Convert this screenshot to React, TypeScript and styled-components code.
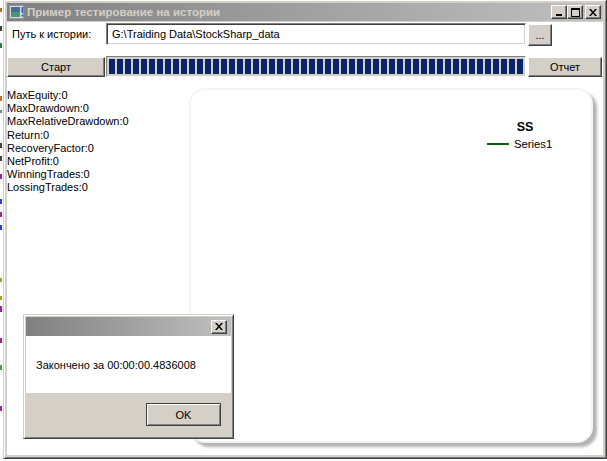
import React from "react";
import styled, { createGlobalStyle } from "styled-components";

const Global = createGlobalStyle`
  html, body { margin: 0; padding: 0; background: #fff; }
  body { font-family: "Liberation Sans", Arial, sans-serif; font-size: 11px; color: #000; }
  * { box-sizing: border-box; }
`;

const Screen = styled.div`
  position: relative;
  width: 607px;
  height: 461px;
  overflow: hidden;
  background: #fff;
`;

const BackStrip = styled.div`
  position: absolute;
  left: 0;
  top: 0;
  width: 3px;
  height: 461px;
  overflow: hidden;
  display: flex;
  flex-direction: column;
`;

const BackMark = styled.div<{ $c: string; $gap: number; $h: number }>`
  width: 2px;
  height: ${(p) => p.$h}px;
  margin-top: ${(p) => p.$gap}px;
  background: ${(p) => p.$c};
`;

const Window = styled.div`
  position: absolute;
  left: 3px;
  top: -1px;
  width: 604px;
  height: 460px;
  background: #d4d0c8;
  border: 1px solid;
  border-color: #d4d0c8 #404040 #404040 #d4d0c8;
  box-shadow: inset 1px 1px #fff, inset -1px -1px #808080;
  padding: 3px;
  display: flex;
  flex-direction: column;
`;

const TitleBar = styled.div<{ $h: number }>`
  height: ${(p) => p.$h}px;
  flex: none;
  display: flex;
  align-items: center;
  padding-left: 2px;
  background: linear-gradient(to right, #808080, #c0c0c0);
`;

const TitleText = styled.span`
  margin-left: 2px;
  font-family: "Liberation Sans", Arial, sans-serif;
  font-weight: bold;
  font-size: 11.5px;
  color: #d4d0c8;
  white-space: nowrap;
  flex: 1;
`;

const CaptionButton = styled.div<{ $gapLeft?: number }>`
  width: 16px;
  height: 14px;
  margin-left: ${(p) => p.$gapLeft ?? 0}px;
  background: #d4d0c8;
  border: 1px solid;
  border-color: #fff #404040 #404040 #fff;
  box-shadow: inset -1px -1px #808080;
  display: flex;
  align-items: center;
  justify-content: center;
  flex: none;
`;

const CaptionEnd = styled.div<{ $w: number }>`
  width: ${(p) => p.$w}px;
  flex: none;
`;

const Client = styled.div`
  margin-top: 1px;
  flex: 1;
  background: #fff;
  display: flex;
  flex-direction: column;
`;

const PathRow = styled.div`
  display: flex;
  align-items: flex-start;
  padding-top: 1px;
  height: 24px;
`;

const FieldLabel = styled.div`
  width: 99px;
  height: 22px;
  padding-left: 5px;
  display: flex;
  align-items: center;
  white-space: nowrap;
  font-size: 11px;
`;

const TextBox = styled.div`
  width: 420px;
  height: 22px;
  border: 1px solid;
  border-color: #808080 #fff #fff #808080;
  box-shadow: inset 1px 1px #404040, inset -1px -1px #d4d0c8;
  padding-left: 5px;
  display: flex;
  align-items: center;
  white-space: nowrap;
  font-size: 11px;
  background: #fff;
`;

const WinButton = styled.div<{ $w: number; $h: number; $ml?: number; $mt?: number }>`
  width: ${(p) => p.$w}px;
  height: ${(p) => p.$h}px;
  margin-left: ${(p) => p.$ml ?? 0}px;
  margin-top: ${(p) => p.$mt ?? 0}px;
  background: #d4d0c8;
  border: 1px solid;
  border-color: #fff #404040 #404040 #fff;
  box-shadow: inset -1px -1px #808080;
  display: flex;
  align-items: center;
  justify-content: center;
  font-size: 11px;
  white-space: nowrap;
  flex: none;
`;

const DefaultButton = styled(WinButton)`
  border-color: #404040;
  box-shadow: inset 1px 1px #fff, inset -1px -1px #808080;
`;

const ControlRow = styled.div`
  display: flex;
  align-items: flex-start;
  margin-top: 10px;
  height: 21px;
`;

const Progress = styled.div`
  width: 420px;
  height: 21px;
  margin-left: 1px;
  border: 1px solid;
  border-color: #808080 #fff #fff #808080;
  background: #d4d0c8;
  padding: 2px;
`;

const ProgressFill = styled.div`
  height: 100%;
  background: repeating-linear-gradient(to right, #0a246a 0 6px, transparent 6px 8px);
`;

const Main = styled.div`
  display: flex;
  margin-top: 11px;
`;

const Stats = styled.div`
  width: 182px;
  padding-top: 1px;
  display: flex;
  flex-direction: column;
`;

const StatLine = styled.div`
  font-size: 11px;
  line-height: 13.2px;
  white-space: nowrap;
`;

const ChartPanel = styled.div`
  width: 404px;
  height: 355px;
  border-radius: 16px;
  background: #fff;
  border: 2px solid #f4f4f4;
  box-shadow: 4px 4px 3px rgba(0, 0, 0, 0.3);
  padding-top: 30px;
  padding-right: 39px;
  display: flex;
  flex-direction: column;
  align-items: flex-end;
`;

const Legend = styled.div`
  width: 65px;
  display: flex;
  flex-direction: column;
`;

const LegendTitle = styled.div`
  padding-left: 11px;
  text-align: center;
  font-weight: bold;
  font-size: 12.5px;
  line-height: 15px;
`;

const LegendItem = styled.div`
  margin-top: 2px;
  height: 14px;
  display: flex;
  align-items: center;
`;

const LegendSwatch = styled.div<{ $c: string }>`
  width: 22px;
  height: 2px;
  background: ${(p) => p.$c};
  margin-right: 5px;
  flex: none;
`;

const LegendLabel = styled.span`
  font-size: 11.3px;
  white-space: nowrap;
`;

const Dialog = styled.div`
  position: absolute;
  left: 23px;
  top: 314px;
  width: 211px;
  height: 125px;
  background: #d4d0c8;
  border: 1px solid;
  border-color: #d4d0c8 #404040 #404040 #d4d0c8;
  box-shadow: inset 1px 1px #fff, inset -1px -1px #808080;
  padding: 2px;
  display: flex;
  flex-direction: column;
`;

const DialogBody = styled.div`
  height: 57px;
  background: #fff;
  padding-left: 10px;
  display: flex;
  align-items: center;
  font-size: 11px;
  white-space: nowrap;
`;

const DialogFooter = styled.div`
  flex: 1;
  display: flex;
  justify-content: flex-end;
  align-items: flex-start;
  padding: 10px 10px 0 0;
`;

const AppIcon = () => (
  <svg width="16" height="16" viewBox="0 0 16 16">
    <rect x="0.5" y="1.5" width="14" height="13" fill="#d9dde2" stroke="#8a94a4" />
    <rect x="2" y="3" width="9" height="5" fill="#4a6c8c" />
    <rect x="2" y="8" width="9" height="5" fill="#3e9a78" />
    <rect x="12.5" y="3" width="1.5" height="6" fill="#2a5cc8" />
    <rect x="12.5" y="10.5" width="1.5" height="2" fill="#2a5cc8" />
  </svg>
);

const MinGlyph = () => (
  <svg width="8" height="8" viewBox="0 0 8 8">
    <rect x="1" y="6" width="6" height="2" fill="#000" />
  </svg>
);

const MaxGlyph = () => (
  <svg width="9" height="9" viewBox="0 0 9 9">
    <rect x="0.5" y="0.5" width="8" height="8" fill="none" stroke="#000" />
    <rect x="0" y="0" width="9" height="2" fill="#000" />
  </svg>
);

const CloseGlyph = () => (
  <svg width="8" height="7" viewBox="0 0 8 7">
    <path d="M0 0h2l2 2.5L6 0h2L5 3.5 8 7H6L4 4.5 2 7H0l3-3.5z" fill="#000" />
  </svg>
);

const backMarks = [
  { c: "#c07020", gap: 8, h: 4 },
  { c: "#404040", gap: 14, h: 5 },
  { c: "#308030", gap: 12, h: 5 },
  { c: "#c07020", gap: 48, h: 5 },
  { c: "#808080", gap: 9, h: 3 },
  { c: "#404040", gap: 30, h: 5 },
  { c: "#404040", gap: 8, h: 5 },
  { c: "#a020a0", gap: 13, h: 5 },
  { c: "#2040e0", gap: 20, h: 5 },
  { c: "#a020a0", gap: 8, h: 5 },
  { c: "#2040e0", gap: 8, h: 5 },
  { c: "#b0a020", gap: 48, h: 4 },
  { c: "#b0a020", gap: 14, h: 4 },
  { c: "#a020a0", gap: 6, h: 6 },
  { c: "#a020a0", gap: 26, h: 5 },
  { c: "#40a040", gap: 22, h: 5 },
  { c: "#a020a0", gap: 36, h: 5 },
];

const stats = [
  "MaxEquity:0",
  "MaxDrawdown:0",
  "MaxRelativeDrawdown:0",
  "Return:0",
  "RecoveryFactor:0",
  "NetProfit:0",
  "WinningTrades:0",
  "LossingTrades:0",
];

export default function App() {
  return (
    <Screen>
      <Global />
      <BackStrip>
        {backMarks.map((m, i) => (
          <BackMark key={i} $c={m.c} $gap={m.gap} $h={m.h} />
        ))}
      </BackStrip>
      <Window>
        <TitleBar $h={18}>
          <AppIcon />
          <TitleText>Пример тестирование на истории</TitleText>
          <CaptionButton>
            <MinGlyph />
          </CaptionButton>
          <CaptionButton>
            <MaxGlyph />
          </CaptionButton>
          <CaptionButton $gapLeft={2}>
            <CloseGlyph />
          </CaptionButton>
          <CaptionEnd $w={2} />
        </TitleBar>
        <Client>
          <PathRow>
            <FieldLabel>Путь к истории:</FieldLabel>
            <TextBox>G:\Traiding Data\StockSharp_data</TextBox>
            <WinButton $w={24} $h={22} $ml={2} $mt={1}>
              ...
            </WinButton>
          </PathRow>
          <ControlRow>
            <WinButton $w={98} $h={20} $mt={1}>
              Старт
            </WinButton>
            <Progress>
              <ProgressFill />
            </Progress>
            <WinButton $w={74} $h={20} $ml={2} $mt={1}>
              Отчет
            </WinButton>
          </ControlRow>
          <Main>
            <Stats>
              {stats.map((s) => (
                <StatLine key={s}>{s}</StatLine>
              ))}
            </Stats>
            <ChartPanel>
              <Legend>
                <LegendTitle>SS</LegendTitle>
                <LegendItem>
                  <LegendSwatch $c="#006400" />
                  <LegendLabel>Series1</LegendLabel>
                </LegendItem>
              </Legend>
            </ChartPanel>
          </Main>
        </Client>
      </Window>
      <Dialog>
        <TitleBar $h={19}>
          <TitleText />
          <CaptionButton>
            <CloseGlyph />
          </CaptionButton>
          <CaptionEnd $w={4} />
        </TitleBar>
        <DialogBody>Закончено за 00:00:00.4836008</DialogBody>
        <DialogFooter>
          <DefaultButton $w={75} $h={23}>
            OK
          </DefaultButton>
        </DialogFooter>
      </Dialog>
    </Screen>
  );
}
